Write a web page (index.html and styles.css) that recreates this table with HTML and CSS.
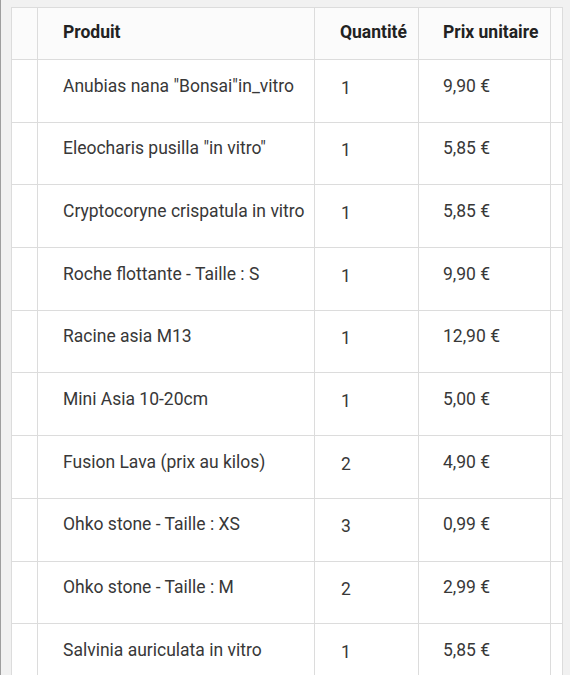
FILE: index.html
```html
<!DOCTYPE html>
<html lang="fr">
<head>
<meta charset="utf-8">
<title>Commande</title>
<link rel="stylesheet" href="styles.css">
</head>
<body>
<div class="frame">
  <table class="order">
    <colgroup>
      <col class="c-sel">
      <col class="c-prod">
      <col class="c-qty">
      <col class="c-price">
      <col class="c-more">
    </colgroup>
    <thead>
      <tr>
        <th></th>
        <th class="prod">Produit</th>
        <th class="qty">Quantité</th>
        <th class="price">Prix unitaire</th>
        <th></th>
      </tr>
    </thead>
    <tbody>
      <tr><td></td><td class="prod">Anubias nana "Bonsai"in_vitro</td><td class="qty">1</td><td class="price">9,90 €</td><td></td></tr>
      <tr><td></td><td class="prod">Eleocharis pusilla "in vitro"</td><td class="qty">1</td><td class="price">5,85 €</td><td></td></tr>
      <tr><td></td><td class="prod">Cryptocoryne crispatula in vitro</td><td class="qty">1</td><td class="price">5,85 €</td><td></td></tr>
      <tr><td></td><td class="prod">Roche flottante - Taille : S</td><td class="qty">1</td><td class="price">9,90 €</td><td></td></tr>
      <tr><td></td><td class="prod">Racine asia M13</td><td class="qty">1</td><td class="price">12,90 €</td><td></td></tr>
      <tr><td></td><td class="prod">Mini Asia 10-20cm</td><td class="qty">1</td><td class="price">5,00 €</td><td></td></tr>
      <tr><td></td><td class="prod">Fusion Lava (prix au kilos)</td><td class="qty">2</td><td class="price">4,90 €</td><td></td></tr>
      <tr><td></td><td class="prod">Ohko stone - Taille : XS</td><td class="qty">3</td><td class="price">0,99 €</td><td></td></tr>
      <tr><td></td><td class="prod">Ohko stone - Taille : M</td><td class="qty">2</td><td class="price">2,99 €</td><td></td></tr>
      <tr><td></td><td class="prod">Salvinia auriculata in vitro</td><td class="qty">1</td><td class="price">5,85 €</td><td></td></tr>
    </tbody>
  </table>
</div>
</body>
</html>
```

FILE: styles.css
```css
html, body {
  margin: 0;
  padding: 0;
  background: #f1f1f1;
  height: 100%;
  overflow: hidden;
}

.frame {
  border-left: 1px solid #9e9e9e;
  padding: 7px 0 0 10px;
  min-height: 100%;
  box-sizing: border-box;
  font-family: Roboto, "Noto Sans", sans-serif;
}

.order {
  border-collapse: separate;
  border-spacing: 0;
  table-layout: fixed;
  width: 551px;
  background: #fff;
  border-right: 1px solid #dcdcdc;
  border-bottom: 1px solid #dcdcdc;
}

.c-sel { width: 26px; }
.c-prod { width: 277px; }
.c-qty { width: 104px; }
.c-price { width: 132px; }
.c-more { width: 12px; }

.order th,
.order td {
  box-sizing: border-box;
  border-left: 1px solid #dcdcdc;
  border-top: 1px solid #dcdcdc;
  padding: 0;
  vertical-align: top;
  text-align: left;
  white-space: nowrap;
  overflow: hidden;
}

.order thead th {
  height: 52px;
  font-size: 17.5px;
  line-height: 24px;
  font-weight: 700;
  color: #222;
  padding-top: 12px;
  background: #fbfbfb;
}

.order thead th.prod { padding-left: 25px; }
.order thead th.qty { padding-left: 25px; }
.order thead th.price { padding-left: 24px; }

.order tbody td {
  height: 62.7px;
  font-size: 17.5px;
  line-height: 24px;
  color: #383838;
  padding-top: 13.5px;
}

.order tbody td.prod { padding-left: 25px; }
.order tbody td.qty { padding-left: 26px; padding-top: 15.5px; }
.order tbody td.price { padding-left: 24px; }
```
